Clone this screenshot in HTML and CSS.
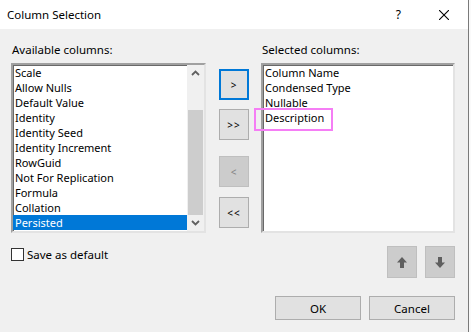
FILE: index.html
```html
<!DOCTYPE html>
<html lang="en">
<head>
  <meta charset="UTF-8" />
  <title>Column Selection</title>
  <link rel="stylesheet" href="styles.css">
</head>
<body>
  <div class="dialog">
    <header class="titlebar">
      <span class="title">Column Selection</span>
      <span class="help">?</span>
      <svg class="close" width="10" height="10" viewBox="0 0 10 10">
        <path d="M0 0L10 10M10 0L0 10" stroke="#000" stroke-width="1.1" />
      </svg>
    </header>

    <main class="content">
      <div class="columns">
        <label class="caption">Available columns:</label>
        <span></span>
        <label class="caption">Selected columns:</label>

        <div class="listbox">
          <ul class="items">
            <li>Scale</li>
            <li>Allow Nulls</li>
            <li>Default Value</li>
            <li>Identity</li>
            <li>Identity Seed</li>
            <li>Identity Increment</li>
            <li>RowGuid</li>
            <li>Not For Replication</li>
            <li>Formula</li>
            <li>Collation</li>
            <li class="selected">Persisted</li>
          </ul>
          <div class="scrollbar">
            <div class="arrow">
              <svg width="9" height="6" viewBox="0 0 9 6"><path d="M1 5L4.5 1.5L8 5" fill="none" stroke="#606060" stroke-width="1.8"/></svg>
            </div>
            <div class="track"><div class="thumb"></div></div>
            <div class="arrow">
              <svg width="9" height="6" viewBox="0 0 9 6"><path d="M1 1L4.5 4.5L8 1" fill="none" stroke="#606060" stroke-width="1.8"/></svg>
            </div>
          </div>
        </div>

        <div class="movers">
          <button class="btn mover focused">&gt;</button>
          <button class="btn mover add-all">&gt;&gt;</button>
          <button class="btn mover remove" disabled>&lt;</button>
          <button class="btn mover remove-all">&lt;&lt;</button>
        </div>

        <div class="listbox chosen">
          <ul class="items">
            <li>Column Name</li>
            <li>Condensed Type</li>
            <li>Nullable</li>
            <li>Description</li>
          </ul>
          <div class="marker"></div>
        </div>
      </div>

      <div class="options">
        <label class="check"><span class="box"></span>Save as default</label>
        <div class="order">
          <button class="btn square" disabled>
            <svg width="10" height="11" viewBox="0 0 10 11"><path d="M5 0L10 5.5H7V11H3V5.5H0Z" fill="#5f5f5f"/></svg>
          </button>
          <button class="btn square" disabled>
            <svg width="10" height="11" viewBox="0 0 10 11"><path d="M5 11L10 5.5H7V0H3V5.5H0Z" fill="#5f5f5f"/></svg>
          </button>
        </div>
      </div>

      <div class="actions">
        <button class="btn action">OK</button>
        <button class="btn action">Cancel</button>
      </div>
    </main>
  </div>
</body>
</html>
```

FILE: styles.css
```css
body {
  margin: 0;
  background: #fafafa;
  font-family: "Noto Sans", "Liberation Sans", sans-serif;
  font-size: 11.5px;
  color: #000;
}

.dialog {
  width: 468px;
  height: 332px;
  background: #f0f0f0;
  border-right: 1px solid #7a7a7a;
}

.titlebar {
  height: 29px;
  background: #fff;
  display: flex;
  align-items: center;
  padding: 0 0 0 7px;
}

.title {
  flex: 1;
}

.help {
  margin-right: 38px;
  font-size: 12px;
}

.close {
  margin-right: 19px;
}

.content {
  padding: 13px 13px 0 11px;
}

.columns {
  display: grid;
  grid-template-columns: 195px 55px 194px;
  grid-template-rows: 15px 170px;
  row-gap: 6px;
}

.caption {
  line-height: 15px;
  padding-left: 1px;
}

.listbox {
  position: relative;
  display: flex;
  background: #fff;
  border: 2px solid;
  border-color: #a0a0a0 #e3e3e3 #e3e3e3 #a0a0a0;
  box-shadow: inset 1px 1px 0 #696969;
}

.items {
  flex: 1;
  list-style: none;
  margin: 0;
  padding: 0;
  font-size: 11px;
}

.items li {
  height: 15px;
  line-height: 15px;
  padding-left: 2px;
  white-space: nowrap;
}

.items li.selected {
  background: #0078d7;
  color: #fff;
}

.scrollbar {
  width: 17px;
  display: flex;
  flex-direction: column;
  background: #f0f0f0;
}

.arrow {
  height: 17px;
  display: flex;
  align-items: center;
  justify-content: center;
}

.track {
  flex: 1;
  padding-top: 28px;
}

.thumb {
  height: 105px;
  margin: 0 1px;
  background: #cdcdcd;
}

.movers {
  display: flex;
  flex-direction: column;
  padding: 6px 0 0 13px;
}

.btn {
  font-family: inherit;
  font-size: 11.5px;
  color: #000;
  background: #e1e1e1;
  border: 1px solid #adadad;
  padding: 0;
  display: flex;
  align-items: center;
  justify-content: center;
}

.btn:disabled {
  background: #cccccc;
  border-color: #bfbfbf;
  color: #838383;
}

.mover {
  width: 30px;
  height: 31px;
  font-size: 10px;
  letter-spacing: 1px;
}

.mover.focused {
  border: 2px solid #0078d7;
}

.add-all {
  margin-top: 9px;
}

.remove {
  margin-top: 16px;
}

.remove-all {
  margin-top: 10px;
}

.marker {
  position: absolute;
  left: -9px;
  top: 43px;
  width: 75px;
  height: 19px;
  border: 2px solid #f57ef5;
}

.options {
  display: flex;
  justify-content: space-between;
  margin-top: 13px;
}

.check {
  display: flex;
  align-items: center;
  gap: 3px;
  height: 15px;
  margin-top: 1px;
}

.box {
  width: 11px;
  height: 11px;
  border: 1px solid #333;
  background: #fff;
}

.order {
  display: flex;
  gap: 8px;
}

.square {
  width: 30px;
  height: 32px;
}

.actions {
  display: flex;
  justify-content: flex-end;
  gap: 8px;
  margin-top: 18px;
}

.action {
  width: 86px;
  height: 24px;
}
```
